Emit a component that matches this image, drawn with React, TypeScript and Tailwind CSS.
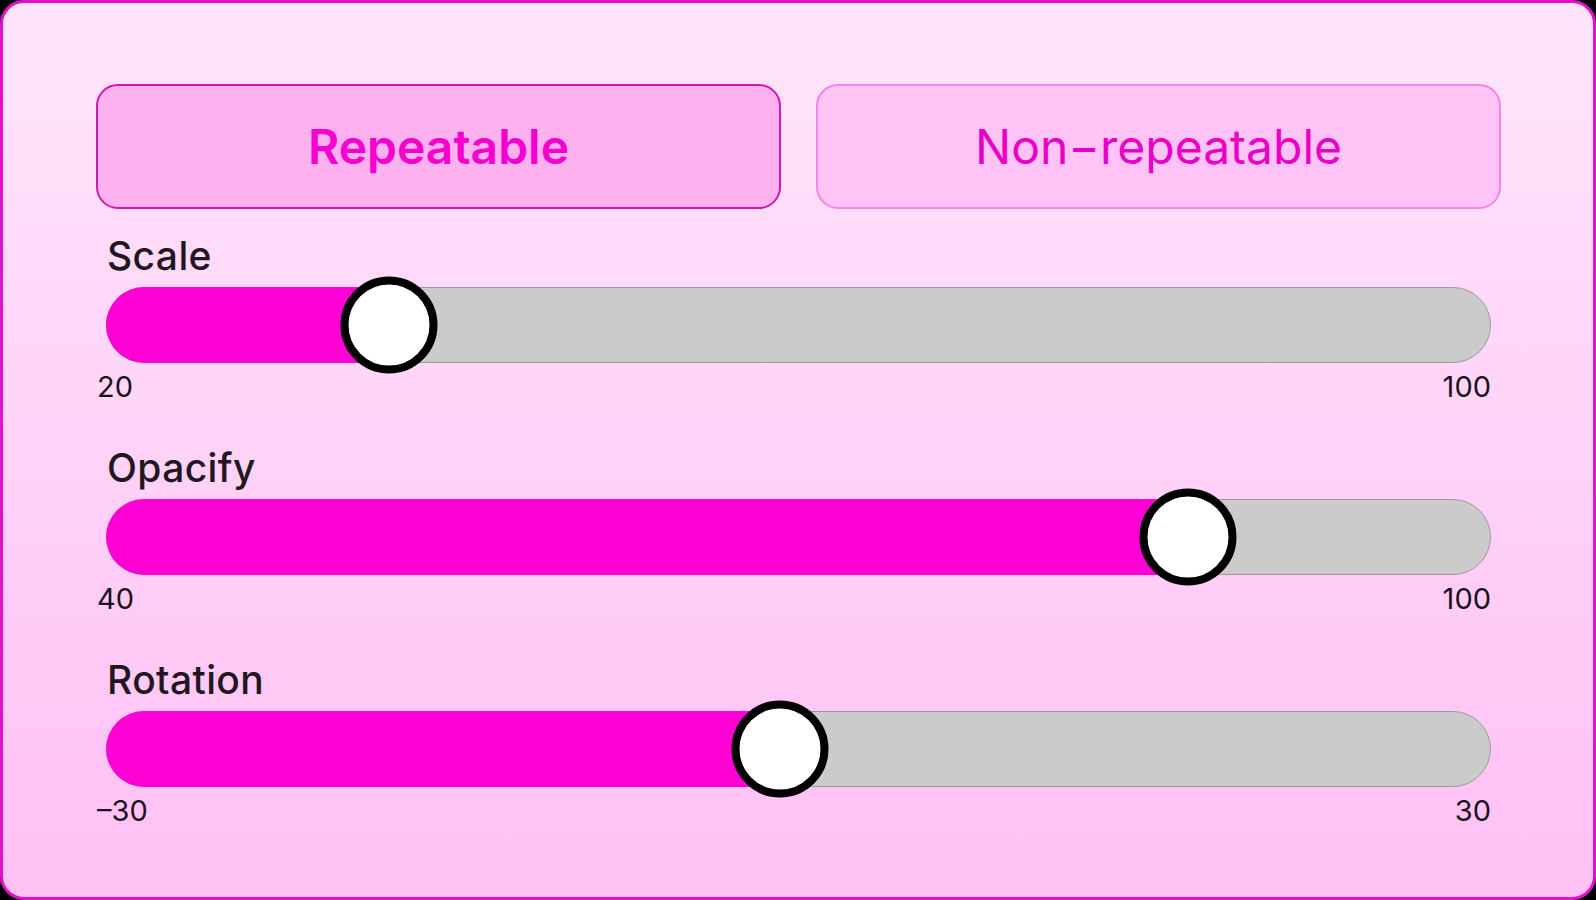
import React, { useState } from 'react';

type SliderProps = {
  label: string;
  min: number;
  max: number;
  value: number;
};

const font = { fontFamily: 'Inter, "Noto Sans", sans-serif' };

function Slider({ label, min, max, value }: SliderProps) {
  const pct = ((value - min) / (max - min)) * 100;
  return (
    <div className="flex flex-col px-[10px]">
      <div className="mt-[29px] h-[36px] text-[39px] leading-[36px] font-medium tracking-[0.01em] text-[#221622] pl-px">
        {label}
      </div>
      {/* track */}
      <div className="relative mt-[13px] h-[76px] rounded-full bg-[#cbcbcb] border border-[#9a9a9a]">
        <div
          className="absolute -left-px -top-px -bottom-px rounded-l-full bg-[#ff00d4]"
          style={{ width: `${pct}%` }}
        />
        <div
          className="absolute top-1/2 h-[97px] w-[97px] -translate-x-1/2 -translate-y-1/2 rounded-full bg-white border-[8px] border-black"
          style={{ left: `${pct}%` }}
        />
      </div>
      <div className="mt-[10px] mb-[20px] flex h-[28px] justify-between text-[29px] leading-[28px] text-[#1c121c]">
        <span className="-ml-[9px]">{min < 0 ? `–${Math.abs(min)}` : min}</span>
        <span>{max}</span>
      </div>
    </div>
  );
}

export default function App() {
  const [mode, setMode] = useState<'repeat' | 'once'>('repeat');

  const on =
    'flex h-[125px] flex-1 items-center justify-center rounded-[22px] border-2 border-[#d418ac] bg-[#fdb2ef] text-[48px] font-semibold text-[#f400cf]';
  const off =
    'flex h-[125px] flex-1 items-center justify-center rounded-[22px] border-2 border-[#f484e6] bg-[#ffc3f5] text-[48px] text-[#e800c8]';

  return (
    <div className="h-[900px] w-[1596px] bg-black" style={font}>
      <div className="flex h-full flex-col rounded-[24px] border-[3px] border-[#e312c9] bg-gradient-to-b from-[#ffe5fb] to-[#ffc0f4] pl-[93px] pr-[92px] pt-[81px]">
        <div className="flex gap-[35px]">
          <button onClick={() => setMode('repeat')} className={mode === 'repeat' ? on : off}>
            Repeatable
          </button>
          <button onClick={() => setMode('once')} className={mode === 'once' ? on : off}>
            Non−repeatable
          </button>
        </div>

        <Slider label="Scale" min={20} max={100} value={36.3} />
        <Slider label="Opacify" min={40} max={100} value={86.9} />
        <Slider label="Rotation" min={-30} max={30} value={-0.8} />
      </div>
    </div>
  );
}
